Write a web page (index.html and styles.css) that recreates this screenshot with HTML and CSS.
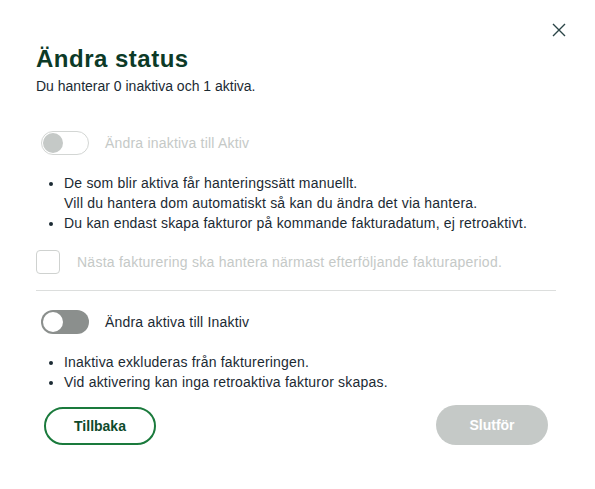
FILE: index.html
```html
<!DOCTYPE html>
<html lang="sv">
<head>
<meta charset="utf-8">
<title>Ändra status</title>
<link rel="stylesheet" href="styles.css">
</head>
<body>
<div class="modal">
  <button class="close" aria-label="Stäng">
    <svg width="14" height="14" viewBox="0 0 14 14"><path d="M1 1 L13 13 M13 1 L1 13" stroke="#2b4547" stroke-width="1.4" fill="none"/></svg>
  </button>
  <h1 class="title">Ändra status</h1>
  <p class="subtitle">Du hanterar 0 inaktiva och 1 aktiva.</p>

  <div class="toggle-row toggle-row--first">
    <span class="toggle toggle--disabled"><span class="knob"></span></span>
    <span class="toggle-label toggle-label--disabled">Ändra inaktiva till Aktiv</span>
  </div>
  <ul class="info">
    <li>De som blir aktiva får hanteringssätt manuellt.<br>Vill du hantera dom automatiskt så kan du ändra det via hantera.</li>
    <li>Du kan endast skapa fakturor på kommande fakturadatum, ej retroaktivt.</li>
  </ul>
  <div class="check-row">
    <span class="checkbox"></span>
    <span class="check-label">Nästa fakturering ska hantera närmast efterföljande fakturaperiod.</span>
  </div>
  <hr class="divider">
  <div class="toggle-row toggle-row--second">
    <span class="toggle toggle--off"><span class="knob"></span></span>
    <span class="toggle-label">Ändra aktiva till Inaktiv</span>
  </div>
  <ul class="info">
    <li>Inaktiva exkluderas från faktureringen.</li>
    <li>Vid aktivering kan inga retroaktiva fakturor skapas.</li>
  </ul>
  <div class="actions">
    <button class="btn btn--outline">Tillbaka</button>
    <button class="btn btn--disabled">Slutför</button>
  </div>
</div>
</body>
</html>
```
FILE: styles.css
```css
html, body {
  margin: 0;
  padding: 0;
  background: #ffffff;
}
body {
  font-family: "Liberation Sans", Arial, sans-serif;
  color: #1b2a33;
  font-size: 14px;
}
.modal {
  position: relative;
  width: 520px;
  padding: 45px 0 0 36px;
}
.close {
  position: absolute;
  top: 23px;
  left: 552px;
  width: 14px;
  height: 14px;
  padding: 0;
  border: 0;
  background: none;
  display: flex;
}
.title {
  margin: 0;
  font-size: 24px;
  line-height: 28px;
  font-weight: bold;
  letter-spacing: 0.5px;
  color: #0c3a27;
}
.subtitle {
  margin: 4px 0 0;
  font-size: 14px;
  line-height: 18px;
}
.toggle-row {
  display: flex;
  align-items: center;
  height: 24px;
  padding-left: 5px;
}
.toggle-row--first { margin-top: 36px; }
.toggle-row--second { margin-top: 19px; }
.toggle {
  box-sizing: border-box;
  width: 48px;
  height: 24px;
  border-radius: 12px;
  display: flex;
  align-items: center;
  padding: 0 2px;
}
.toggle--disabled {
  border: 1px solid #d3d6d4;
  background: #ffffff;
  padding: 0 1px;
}
.toggle--disabled .knob { background: #c5c9c7; }
.toggle--off { background: #8b8f8d; }
.toggle--off .knob { background: #ffffff; }
.knob {
  width: 20px;
  height: 20px;
  border-radius: 50%;
}
.toggle-label {
  margin-left: 16px;
  line-height: 20px;
  letter-spacing: 0.2px;
}
.toggle-label--disabled { color: #c5c9c7; }
.info {
  margin: 18px 0 0;
  padding-left: 28px;
  line-height: 20px;
  letter-spacing: 0.2px;
}
.info li::marker { font-size: 13px; }
.check-row {
  display: flex;
  align-items: center;
  margin-top: 17px;
}
.checkbox {
  box-sizing: border-box;
  width: 24px;
  height: 24px;
  border: 1px solid #cfd2d0;
  border-radius: 4px;
}
.check-label {
  margin-left: 17px;
  color: #c5c9c7;
  letter-spacing: 0.25px;
}
.divider {
  margin: 16px 0 0;
  border: 0;
  border-top: 1px solid #dcdedd;
}
.actions {
  display: flex;
  justify-content: space-between;
  align-items: flex-end;
  margin-top: 13px;
  padding: 0 8px;
}
.btn {
  box-sizing: border-box;
  width: 112px;
  border-radius: 20px;
  font-family: inherit;
  font-size: 14px;
  font-weight: bold;
  padding: 0;
}
.btn--outline {
  height: 38px;
  border: 2px solid #1a7a3c;
  background: #ffffff;
  color: #0e4a2b;
}
.btn--disabled {
  height: 40px;
  border: 0;
  background: #c5c9c7;
  color: #ffffff;
}
```
